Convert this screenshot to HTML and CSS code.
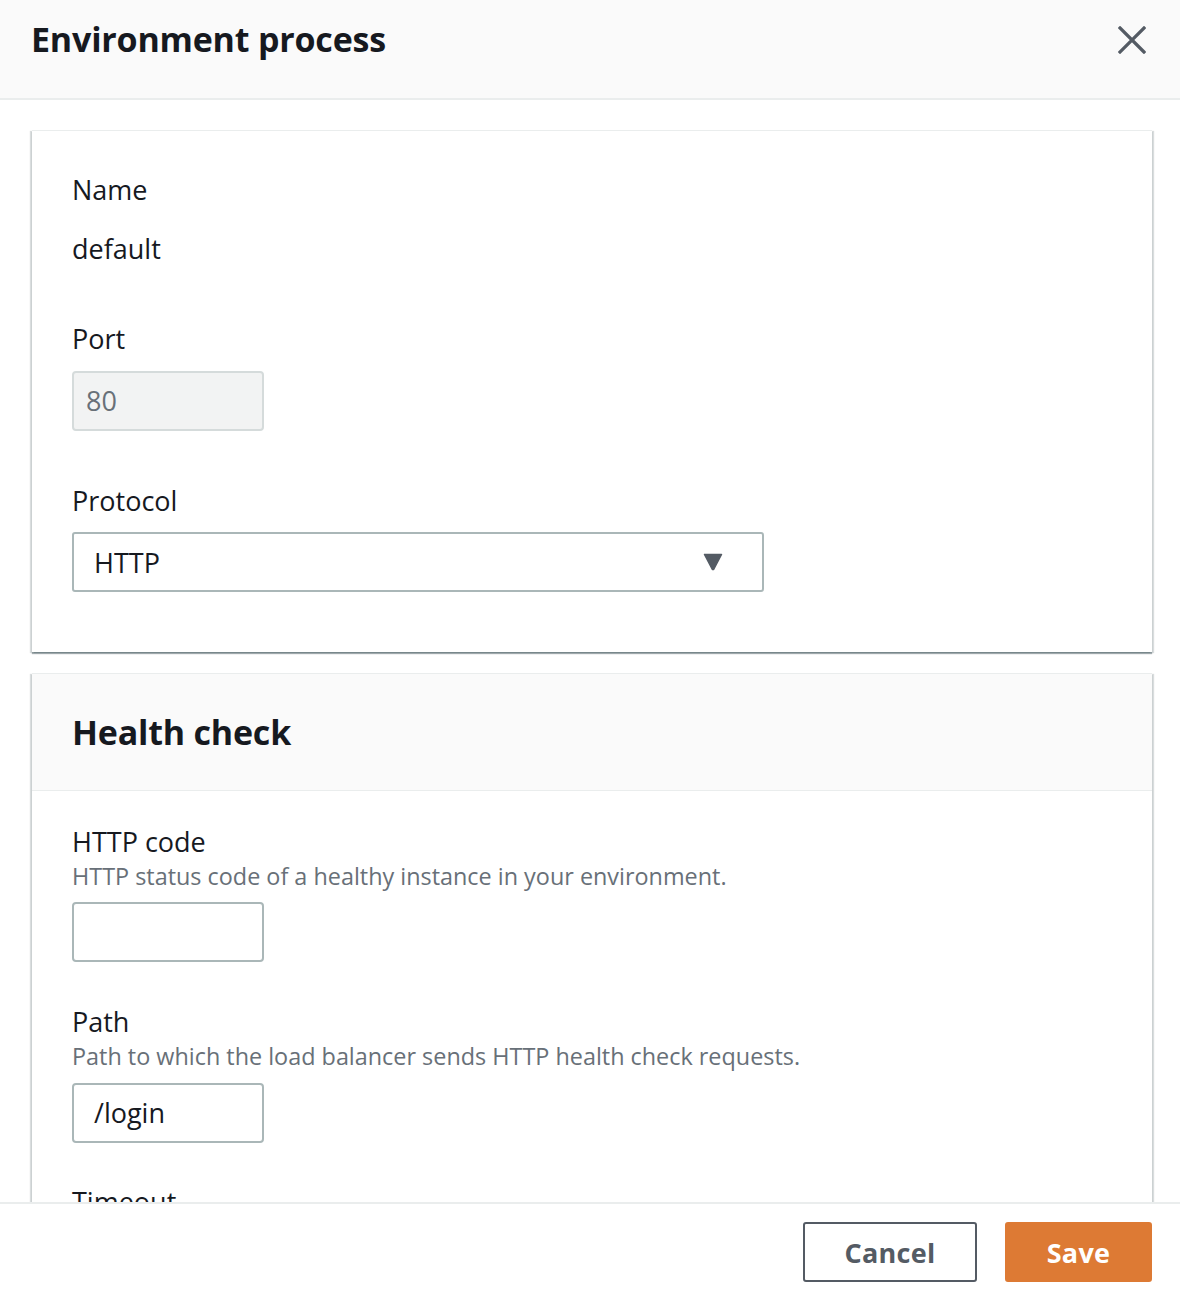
FILE: index.html
```html
<!DOCTYPE html>
<html lang="en">
<head>
<meta charset="utf-8">
<title>Environment process</title>
<link rel="stylesheet" href="styles.css">
</head>
<body>
<div class="modal">
  <header class="modal-header">
    <h1 class="modal-title">Environment process</h1>
    <button class="close-btn" aria-label="Close">
      <svg width="28" height="28" viewBox="0 0 28 28"><path d="M2 2 L26 26 M26 2 L2 26" stroke="#545b64" stroke-width="3.2" stroke-linecap="square" fill="none"/></svg>
    </button>
  </header>

  <main class="modal-body">
    <section class="card card-plain">
      <div class="field field-name">
        <div class="label">Name</div>
        <div class="value">default</div>
      </div>
      <div class="field field-port">
        <div class="label">Port</div>
        <div class="input input-disabled">80</div>
      </div>
      <div class="field field-protocol">
        <div class="label">Protocol</div>
        <div class="select">
          <span>HTTP</span>
          <svg class="caret" width="20" height="18" viewBox="0 0 20 18"><path d="M1.5 1.5 H18.5 L10.9 16 Q10 17.2 9.1 16 Z" fill="#545b64" stroke="#545b64" stroke-width="1.5" stroke-linejoin="round"/></svg>
        </div>
      </div>
    </section>

    <section class="card">
      <div class="card-header">
        <h2 class="card-title">Health check</h2>
      </div>
      <div class="card-content">
        <div class="field field-code">
          <div class="label">HTTP code</div>
          <div class="desc">HTTP status code of a healthy instance in your environment.</div>
          <div class="input input-code"></div>
        </div>
        <div class="field field-path">
          <div class="label">Path</div>
          <div class="desc">Path to which the load balancer sends HTTP health check requests.</div>
          <div class="input input-path">/login</div>
        </div>
        <div class="field field-timeout">
          <div class="label">Timeout</div>
        </div>
      </div>
    </section>
  </main>

  <footer class="modal-footer">
    <button class="btn btn-normal">Cancel</button>
    <button class="btn btn-primary">Save</button>
  </footer>
</div>
</body>
</html>
```

FILE: styles.css
```css
* { box-sizing: border-box; }

html, body {
  margin: 0;
  padding: 0;
  background: #ffffff;
  font-family: "Open Sans", "Noto Sans", "Liberation Sans", sans-serif;
  color: #16191f;
}

.modal {
  height: 100vh;
  display: flex;
  flex-direction: column;
  overflow: hidden;
}

.modal-header {
  flex: 0 0 100px;
  height: 100px;
  background: #fafafa;
  border-bottom: 2px solid #eaeded;
  display: flex;
  justify-content: space-between;
  align-items: flex-start;
  padding: 19px 34px 0 31px;
}

.modal-title {
  margin: 0;
  font-size: 34px;
  line-height: 40px;
  font-weight: 700;
  letter-spacing: -0.2px;
  color: #16191f;
}

.close-btn {
  border: 0;
  background: transparent;
  padding: 0;
  margin-top: 7px;
  width: 28px;
  height: 28px;
  cursor: pointer;
}

.modal-body {
  flex: 1 1 auto;
  overflow: hidden;
  padding: 30px 28px 0 32px;
}

.card {
  background: #ffffff;
  border-top: 1px solid #eaeded;
  box-shadow: 0 2px 1px 0 rgba(0, 28, 36, 0.35), 2px 1px 1px 0 rgba(0, 28, 36, 0.15), -2px 1px 1px 0 rgba(0, 28, 36, 0.15);
  margin-bottom: 21px;
}

.card-plain {
  padding: 44px 40px 60px 40px;
}

.card-header {
  height: 117px;
  background: #fafafa;
  border-bottom: 1px solid #eaeded;
  display: flex;
  align-items: center;
  padding: 0 40px 0 40px;
}

.card-title {
  margin: 0;
  font-size: 34px;
  line-height: 40px;
  font-weight: 700;
  letter-spacing: -0.2px;
  color: #16191f;
}

.card-content {
  padding: 36px 40px 40px 40px;
}

.label, .value {
  font-size: 27px;
  line-height: 30px;
  color: #16191f;
}

.value {
  margin-top: 29px;
}

.desc {
  font-size: 23.4px;
  line-height: 26px;
  color: #687078;
  margin-top: 6px;
}

.field-port { margin-top: 60px; }
.field-protocol { margin-top: 55px; }
.field-path { margin-top: 45px; }
.field-timeout { margin-top: 44px; }

.input {
  width: 192px;
  height: 60px;
  border: 2px solid #aab7b8;
  border-radius: 4px;
  background: #ffffff;
  font-size: 27px;
  line-height: 56px;
  color: #16191f;
  padding: 0 20px;
}

.field-port .input { margin-top: 17px; }
.field-code .input { margin-top: 13px; }
.field-path .input { margin-top: 14px; }

.input-disabled {
  background: #f2f3f3;
  border-color: #d5dbdb;
  color: #687078;
  padding: 0 12px;
}

.select {
  margin-top: 16px;
  width: 692px;
  height: 60px;
  border: 2px solid #aab7b8;
  border-radius: 3px;
  background: #ffffff;
  display: flex;
  align-items: center;
  justify-content: space-between;
  padding: 0 39px 0 20px;
  font-size: 27px;
  color: #16191f;
}

.caret { display: block; }

.modal-footer {
  flex: 0 0 100px;
  height: 100px;
  border-top: 2px solid #eaeded;
  background: #ffffff;
  display: flex;
  justify-content: flex-end;
  align-items: flex-start;
  gap: 28px;
  padding: 18px 28px 0 0;
}

.btn {
  height: 60px;
  border-radius: 3px;
  font-family: "Open Sans", "Noto Sans", "Liberation Sans", sans-serif;
  font-size: 27px;
  font-weight: 700;
  letter-spacing: 0.3px;
  cursor: pointer;
}

.btn-normal {
  width: 174px;
  background: #ffffff;
  border: 2px solid #545b64;
  color: #545b64;
}

.btn-primary {
  width: 147px;
  background: #dd7a34;
  border: 2px solid #dd7a34;
  color: #ffffff;
}
```
